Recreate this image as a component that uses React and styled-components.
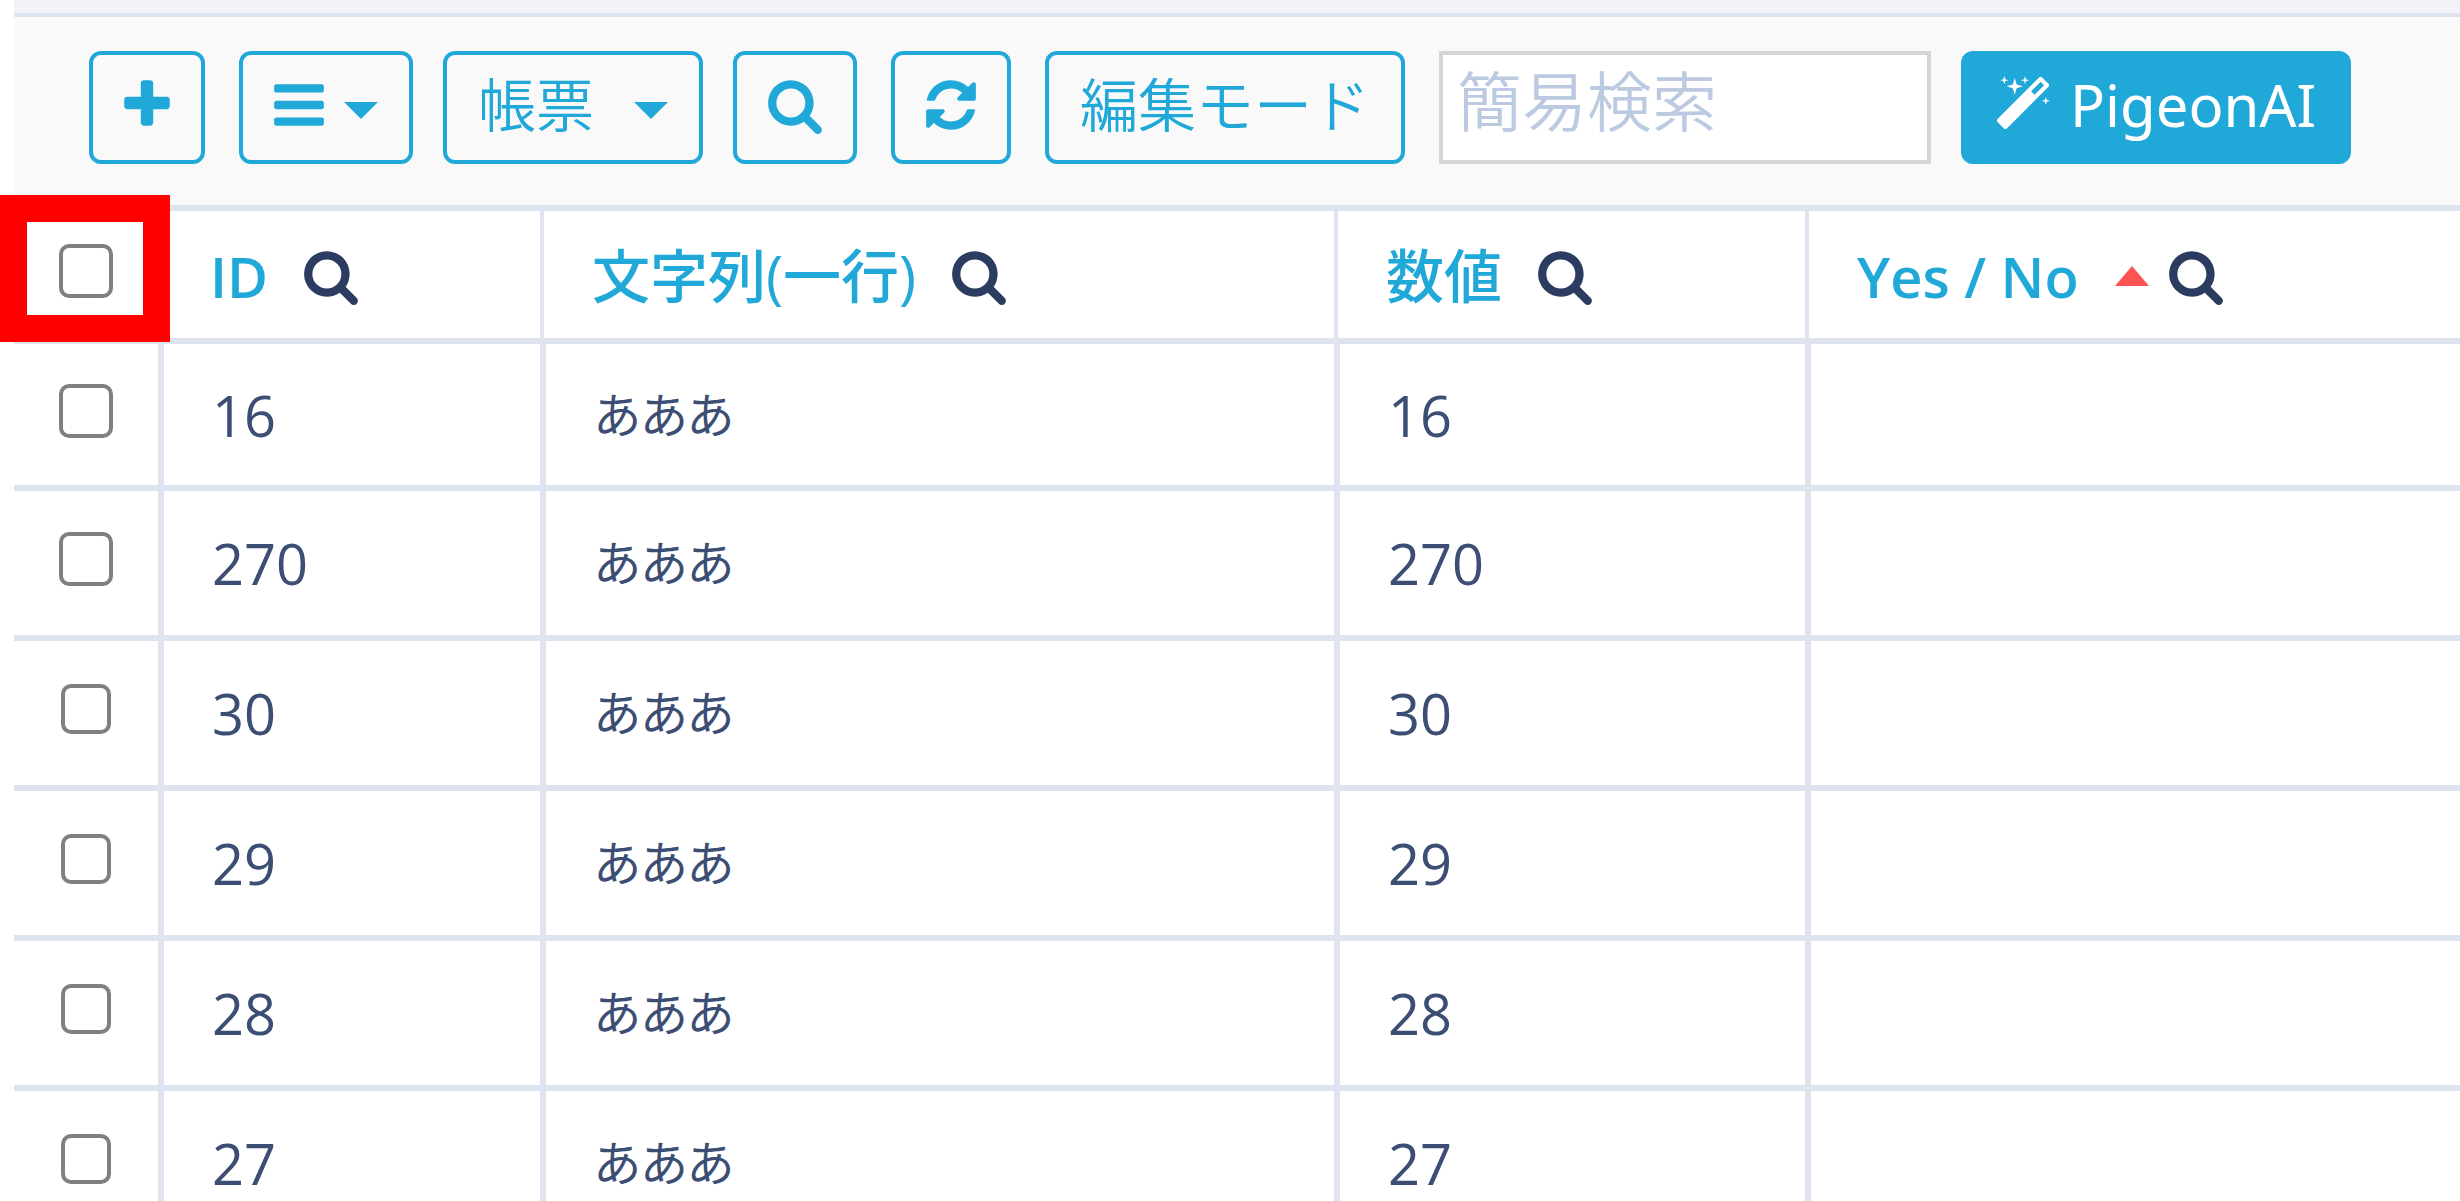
import React, { useState } from 'react';
import styled, { createGlobalStyle } from 'styled-components';

const columns = [
    { key: 'id', label: 'ID', width: 382, latin: true },
    { key: 'text', label: '文字列(一行)', width: 794 },
    { key: 'number', label: '数値', width: 471 },
    { key: 'flag', label: 'Yes / No', sorted: true, latin: true },
];

const items = ['16', '270', '30', '29', '28', '27'].map((id) => (
    { id, text: 'あああ', number: id, flag: '' }
));

// x offset and width of each glyph on the 1792 unit grid
const icons = {
    plus: [192, 1408, 'M1600 736v192q0 40-28 68t-68 28h-416v416q0 40-28 68t-68 28h-192q-40 0-68-28t-28-68v-416h-416q-40 0-68-28t-28-68v-192q0-40 28-68t68-28h416v-416q0-40 28-68t68-28h192q40 0 68 28t28 68v416h416q40 0 68 28t28 68z'],
    bars: [128, 1536, 'M1664 1344v128q0 26-19 45t-45 19h-1408q-26 0-45-19t-19-45v-128q0-26 19-45t45-19h1408q26 0 45 19t19 45zm0-512v128q0 26-19 45t-45 19h-1408q-26 0-45-19t-19-45v-128q0-26 19-45t45-19h1408q26 0 45 19t19 45zm0-512v128q0 26-19 45t-45 19h-1408q-26 0-45-19t-19-45v-128q0-26 19-45t45-19h1408q26 0 45 19t19 45z'],
    search: [0, 1664, 'M1152 832q0-185-131.5-316.5t-316.5-131.5-316.5 131.5-131.5 316.5 131.5 316.5 316.5 131.5 316.5-131.5 131.5-316.5zm512 832q0 52-38 90t-90 38q-54 0-90-38l-343-342q-179 124-399 124-143 0-273.5-55.5t-225-150-150-225-55.5-273.5 55.5-273.5 150-225 225-150 273.5-55.5 273.5 55.5 225 150 150 225 55.5 273.5q0 220-124 399l343 343q37 37 37 90z'],
    refresh: [128, 1536, 'M1639 1056q0 5-1 7-64 268-268 434.5t-478 166.5q-146 0-282.5-55t-243.5-157l-129 129q-19 19-45 19t-45-19-19-45v-448q0-26 19-45t45-19h448q26 0 45 19t19 45-19 45l-137 137q71 66 161 102t187 36q134 0 250-65t186-179q11-17 53-117 8-23 30-23h192q13 0 22.5 9.5t9.5 22.5zm25-800v448q0 26-19 45t-45 19h-448q-26 0-45-19t-19-45 19-45l138-138q-148-137-349-137-134 0-250 65t-186 179q-11 17-53 117-8 23-30 23h-199q-13 0-22.5-9.5t-9.5-22.5v-7q65-268 270-434.5t480-166.5q146 0 284 55.5t245 156.5l130-129q19-19 45-19t45 19 19 45z'],
    magic: [64, 1664, 'M1254 581l293-293-107-107-293 293zm447-293q0 27-18 45l-1286 1286q-18 18-45 18t-45-18l-198-198q-18-18-18-45t18-45l1286-1286q18-18 45-18t45 18l198 198q18 18 18 45zm-1351-190l98 30-98 30-30 98-30-98-98-30 98-30 30-98zm350 162l196 60-196 60-60 196-60-196-196-60 196-60 60-196zm930 478l98 30-98 30-30 98-30-98-98-30 98-30 30-98zm-640-640l98 30-98 30-30 98-30-98-98-30 98-30 30-98z'],
};

function Icon({ name }) {
    const [x, width, path] = icons[name];
    return (
        <Glyph viewBox={`${x} 0 ${width} 1792`} width={Math.round(width * 58 / 1792)} height="58" aria-hidden="true">
            <path d={path} />
        </Glyph>
    );
}

export default function App() {
    const [checked, setChecked] = useState([]);
    const [query, setQuery] = useState('');

    const toggle = (id) => {
        setChecked(checked.includes(id) ? checked.filter((c) => c !== id) : [...checked, id]);
    };
    const toggleAll = () => {
        setChecked(checked.length === items.length ? [] : items.map(({ id }) => id));
    };

    return (
        <Page>
            <GlobalStyle />
            <TopStrip />
            <Toolbar>
                <Button aria-label="追加"><Icon name="plus" /></Button>
                <ButtonGroup>
                    <Button aria-label="メニュー" $gap={20}><Icon name="bars" /><Caret /></Button>
                    <Button $gap={40}>帳票<Caret /></Button>
                    <Button aria-label="検索"><Icon name="search" /></Button>
                </ButtonGroup>
                <Button aria-label="更新"><Icon name="refresh" /></Button>
                <Button>編集モード</Button>
                <ButtonGroup>
                    <SearchInput
                        aria-label="簡易検索"
                        placeholder="簡易検索"
                        value={query}
                        onChange={(e) => setQuery(e.target.value)}
                    />
                    <Button $primary $gap={20}><Icon name="magic" />PigeonAI</Button>
                </ButtonGroup>
            </Toolbar>
            <Table>
                <colgroup>
                    <Col $width={144} />
                    {columns.map(({ key, width }) => <Col key={key} $width={width} />)}
                </colgroup>
                <thead>
                    <tr>
                        <HeadCheckCell>
                            <Checkbox
                                aria-label="すべて選択"
                                checked={checked.length === items.length}
                                onChange={toggleAll}
                            />
                            <Highlight />
                        </HeadCheckCell>
                        {columns.map(({ key, label, sorted, latin }) => (
                            <HeadCell key={key}>
                                <HeadContent>
                                    <SortLink href="#" $latin={latin}>{label}</SortLink>
                                    <HeadIcons>
                                        {sorted && <SortMark />}
                                        <Icon name="search" />
                                    </HeadIcons>
                                </HeadContent>
                            </HeadCell>
                        ))}
                    </tr>
                </thead>
                <tbody>
                    {items.map((item, index) => (
                        <Row key={item.id}>
                            <CheckCell>
                                <Checkbox
                                    aria-label={`${item.id}を選択`}
                                    $small={index > 1}
                                    checked={checked.includes(item.id)}
                                    onChange={() => toggle(item.id)}
                                />
                            </CheckCell>
                            {columns.map(({ key }) => (
                                <Cell key={key} $kana={key === 'text'}>{item[key]}</Cell>
                            ))}
                        </Row>
                    ))}
                </tbody>
            </Table>
        </Page>
    );
}

const GlobalStyle = createGlobalStyle`
* {
    box-sizing: border-box;
}
body {
    margin: 0;
    background: #ffffff;
}
`
const Page = styled.div`
height: 100vh;
overflow: hidden;
padding-left: 14px;
font-family: 'Open Sans', 'Noto Sans CJK JP', sans-serif;
font-size: 56px;
color: #3c4e74;
`
const TopStrip = styled.div`
height: 17px;
background: #f1f3f8;
border-bottom: 4px solid #dfe5ee;
`
const Toolbar = styled.div`
display: flex;
gap: 34px;
height: 194px;
padding: 34px 75px 0;
background: #f9f9f9;
border-bottom: 6px solid #dee4ef;
`
const ButtonGroup = styled.div`
display: flex;
gap: 30px;
`
const Button = styled.button`
display: flex;
flex: none;
align-items: center;
gap: ${({ $gap }) => $gap || 0}px;
height: 113px;
padding: 0 31px 6px;
border: 4px solid #20a8d8;
border-radius: 12px;
background: ${({ $primary }) => $primary ? '#20a8d8' : 'transparent'};
color: ${({ $primary }) => $primary ? '#ffffff' : '#20a8d8'};
font-family: 'Noto Sans', 'Noto Sans CJK JP', sans-serif;
font-weight: ${({ $primary }) => $primary ? 400 : 350};
font-size: 58px;
line-height: 80px;
white-space: nowrap;
cursor: pointer;
`
const Glyph = styled.svg`
display: block;
flex: none;
fill: currentColor;
`
const Caret = styled.span`
margin-top: 12px;
border-top: 17px solid currentColor;
border-left: 17px solid transparent;
border-right: 17px solid transparent;
`
const SearchInput = styled.input`
width: 492px;
height: 113px;
padding: 0 14px 20px;
border: 4px solid #d5d5d5;
border-radius: 0;
background: #ffffff;
color: #3c4e74;
font-family: 'Noto Sans CJK JP', sans-serif;
font-weight: 350;
font-size: 65px;
&::placeholder {
    color: #bccae1;
    opacity: 1;
}
`
const Table = styled.table`
width: 100%;
table-layout: fixed;
border-collapse: separate;
border-spacing: 0;
`
const Col = styled.col`
width: ${({ $width }) => $width ? `${$width}px` : 'auto'};
`
const CheckCell = styled.td`
padding: 0 0 8px;
border-bottom: 6px solid #dee4ef;
`
const HeadCheckCell = styled.th`
position: relative;
padding: 0 0 8px;
border-bottom: 6px solid #dee4ef;
`
const HeadCell = styled.th`
height: 133px;
padding: 2px 0 0 48px;
border-left: 4px solid #dfe4f0;
border-bottom: 6px solid #dee4ef;
`
const HeadContent = styled.div`
display: flex;
align-items: center;
gap: 36px;
line-height: 80px;
white-space: nowrap;
`
const SortLink = styled.a`
color: #20a8d8;
font-size: ${({ $latin }) => $latin ? 56 : 58}px;
font-weight: ${({ $latin }) => $latin ? 600 : 500};
text-decoration: none;
`
const HeadIcons = styled.span`
display: flex;
align-items: center;
gap: 20px;
color: #2b3c60;
`
const SortMark = styled.span`
border-bottom: 20px solid #ff5252;
border-left: 17px solid transparent;
border-right: 17px solid transparent;
`
const Row = styled.tr`
height: 150px;
&:first-child {
    height: 147px;
}
`
const Cell = styled.td`
padding: 0 0 0 48px;
border-left: 6px solid #dfe4f0;
border-bottom: 6px solid #dee4ef;
font-size: ${({ $kana }) => $kana ? 48 : 56}px;
font-feature-settings: ${({ $kana }) => $kana ? '"palt"' : 'normal'};
line-height: 80px;
`
const Checkbox = styled.input.attrs({ type: 'checkbox' })`
appearance: none;
display: block;
width: ${({ $small }) => $small ? 50 : 54}px;
height: ${({ $small }) => $small ? 50 : 54}px;
margin: 0 auto;
border: 4px solid #808080;
border-radius: 10px;
background: #ffffff;
&:checked {
    background: #20a8d8;
}
`
// red frame drawn over the select-all checkbox
const Highlight = styled.div`
position: absolute;
top: -16px;
left: -14px;
width: 170px;
height: 147px;
border: 27px solid #ff0000;
pointer-events: none;
`
